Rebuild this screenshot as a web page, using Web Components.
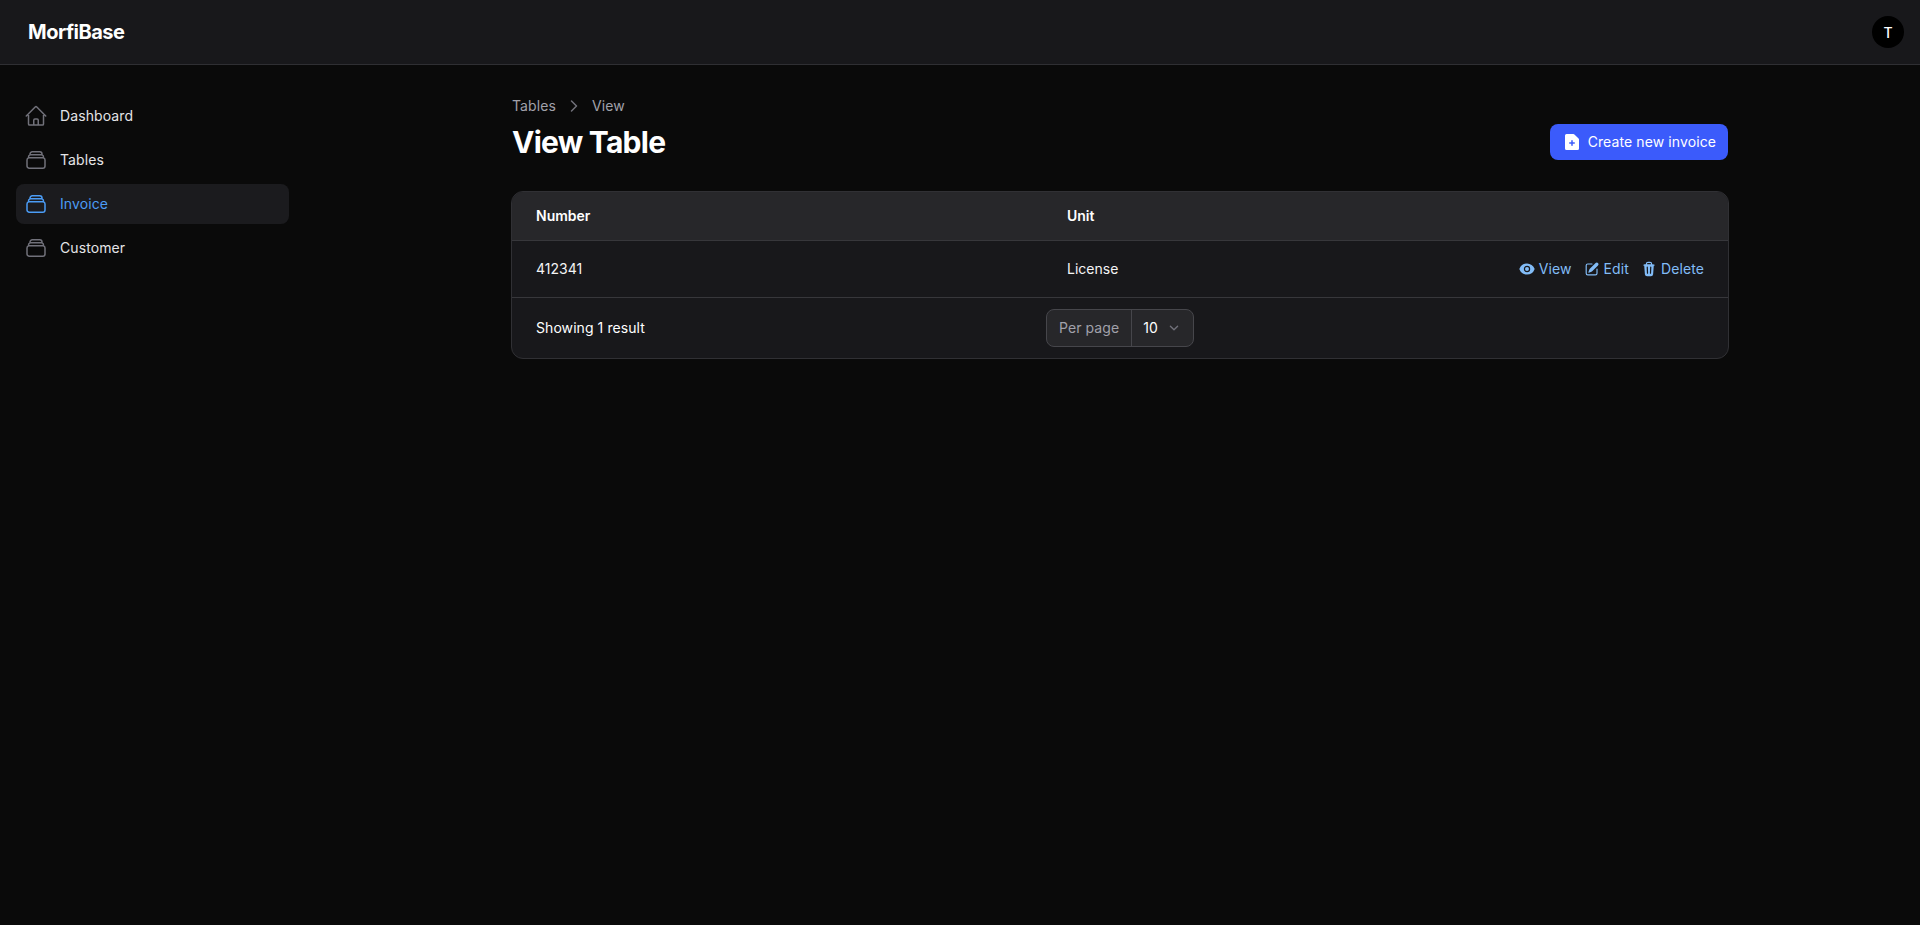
<!DOCTYPE html>
<html lang="en">
<head>
<meta charset="utf-8">
<title>View Table - MorfiBase</title>
<style>
  html, body { margin: 0; height: 100%; background: #0a0a0a; }
  body { font-family: Inter, "Liberation Sans", sans-serif; color: #fff; }
</style>
</head>
<body>
<app-shell>
  <app-topbar slot="top" brand="MorfiBase" initial="T"></app-topbar>
  <app-sidebar slot="side">
    <nav-item icon="home">Dashboard</nav-item>
    <nav-item icon="stack">Tables</nav-item>
    <nav-item icon="stack" active>Invoice</nav-item>
    <nav-item icon="stack">Customer</nav-item>
  </app-sidebar>
  <page-header>
    <a-crumb slot="crumbs">Tables</a-crumb>
    <a-crumb slot="crumbs" last>View</a-crumb>
    <span slot="title">View Table</span>
    <primary-button slot="action" icon="doc-plus">Create new invoice</primary-button>
  </page-header>
  <data-table></data-table>
</app-shell>

<script>
// Icon paths
const ICONS = {
  home: { outline: true, box: 24, d: 'M2.25 12l8.954-8.955c.44-.439 1.152-.439 1.591 0L21.75 12M4.5 9.75v10.125c0 .621.504 1.125 1.125 1.125H9.75v-4.875c0-.621.504-1.125 1.125-1.125h2.25c.621 0 1.125.504 1.125 1.125V21h4.125c.621 0 1.125-.504 1.125-1.125V9.75M8.25 21h8.25' },
  stack: { outline: true, box: 24, d: 'M6 6.878V6a2.25 2.25 0 012.25-2.25h7.5A2.25 2.25 0 0118 6v.878m-12 0c.235-.083.487-.128.75-.128h10.5c.263 0 .515.045.75.128m-12 0A2.25 2.25 0 004.5 9v.878m13.5-3A2.25 2.25 0 0119.5 9v.878m0 0a2.246 2.246 0 00-.75-.128H5.25c-.263 0-.515.045-.75.128m15 0A2.25 2.25 0 0121 12v6a2.25 2.25 0 01-2.25 2.25H5.25A2.25 2.25 0 013 18v-6c0-.98.626-1.813 1.5-2.122' },
  eye: { box: 20, d: 'M10 12.5a2.5 2.5 0 100-5 2.5 2.5 0 000 5zM.664 10.59a1.651 1.651 0 010-1.186A10.004 10.004 0 0110 3c4.257 0 7.893 2.66 9.336 6.41.147.381.146.804 0 1.186A10.004 10.004 0 0110 17c-4.257 0-7.893-2.66-9.336-6.41zM14 10a4 4 0 11-8 0 4 4 0 018 0z' },
  edit: { box: 20, d: 'M5.433 13.917l1.262-3.155A4 4 0 017.58 9.42l6.92-6.918a2.121 2.121 0 013 3l-6.92 6.918c-.383.383-.84.685-1.343.886l-3.154 1.262a.5.5 0 01-.65-.65zM3.5 5.75c0-.69.56-1.25 1.25-1.25H10A.75.75 0 0010 3H4.75A2.75 2.75 0 002 5.75v9.5A2.75 2.75 0 004.75 18h9.5A2.75 2.75 0 0017 15.25V10a.75.75 0 00-1.5 0v5.25c0 .69-.56 1.25-1.25 1.25h-9.5c-.69 0-1.25-.56-1.25-1.25v-9.5z' },
  trash: { box: 20, d: 'M8.75 1A2.75 2.75 0 006 3.75v.443c-.795.077-1.584.176-2.365.298a.75.75 0 10.23 1.482l.149-.022.841 10.518A2.75 2.75 0 007.596 19h4.807a2.75 2.75 0 002.742-2.53l.841-10.52.149.023a.75.75 0 00.23-1.482A41.03 41.03 0 0014 4.193V3.75A2.75 2.75 0 0011.25 1h-2.5zM10 4c.84 0 1.673.025 2.5.075V3.75c0-.69-.56-1.25-1.25-1.25h-2.5c-.69 0-1.25.56-1.25 1.25v.325C8.327 4.025 9.16 4 10 4zM8.58 7.72a.75.75 0 00-1.5.06l.3 7.5a.75.75 0 101.5-.06l-.3-7.5zm4.34.06a.75.75 0 10-1.5-.06l-.3 7.5a.75.75 0 101.5.06l.3-7.5z' },
  'doc-plus': { box: 20, d: 'M4.5 2A1.5 1.5 0 003 3.5v13A1.5 1.5 0 004.5 18h11a1.5 1.5 0 001.5-1.5V7.621a1.5 1.5 0 00-.44-1.06l-4.12-4.122A1.5 1.5 0 0011.378 2H4.5zM10 8a.75.75 0 01.75.75v1.5h1.5a.75.75 0 010 1.5h-1.5v1.5a.75.75 0 01-1.5 0v-1.5h-1.5a.75.75 0 010-1.5h1.5v-1.5A.75.75 0 0110 8z' },
  chevron: { outline: true, box: 20, width: 1.5, d: 'M6 8l4 4 4-4' },
  'chevron-right': { outline: true, box: 20, width: 1.5, d: 'M7.5 5l5 5-5 5' }
};

function iconSvg(name, size) {
  const i = ICONS[name];
  const paint = i.outline
    ? `fill="none" stroke="currentColor" stroke-width="${i.width || 1.5}" stroke-linecap="round" stroke-linejoin="round"`
    : `fill="currentColor" fill-rule="evenodd" clip-rule="evenodd"`;
  return `<svg xmlns="http://www.w3.org/2000/svg" width="${size}" height="${size}" viewBox="0 0 ${i.box} ${i.box}" ${paint} style="display:block;flex:none"><path d="${i.d}"/></svg>`;
}

class AppShell extends HTMLElement {
  constructor() {
    super();
    this.attachShadow({ mode: 'open' });
    this.shadowRoot.innerHTML = `
      <style>
        :host { display: block; min-height: 100vh; background: #0a0a0a; }
        .body { display: grid; grid-template-columns: 320px 1fr; }
        main { width: 1216px; justify-self: center; padding-top: 31px; }
      </style>
      <slot name="top"></slot>
      <div class="body">
        <slot name="side"></slot>
        <main><slot></slot></main>
      </div>
    `;
  }
}
customElements.define('app-shell', AppShell);

class AppTopbar extends HTMLElement {
  constructor() {
    super();
    this.attachShadow({ mode: 'open' });
  }
  connectedCallback() {
    this.shadowRoot.innerHTML = `
      <style>
        :host { display: flex; align-items: center; justify-content: space-between; box-sizing: border-box; height: 65px; padding: 0 16px 0 28px; background: #18181b; border-bottom: 1px solid #2f2f33; }
        .brand { font-size: 20px; line-height: 28px; font-weight: 700; color: #fff; letter-spacing: -0.5px; }
        .avatar { width: 32px; height: 32px; border-radius: 50%; background: #000; color: #fff; font-size: 14px; font-weight: 500; display: flex; align-items: center; justify-content: center; }
      </style>
      <div class="brand">${this.getAttribute('brand')}</div>
      <div class="avatar">${this.getAttribute('initial')}</div>
    `;
  }
}
customElements.define('app-topbar', AppTopbar);

class AppSidebar extends HTMLElement {
  constructor() {
    super();
    this.attachShadow({ mode: 'open' });
    this.shadowRoot.innerHTML = `
      <style>
        :host { display: flex; flex-direction: column; gap: 4px; padding: 31px 31px 0 16px; }
      </style>
      <slot></slot>
    `;
  }
}
customElements.define('app-sidebar', AppSidebar);

class NavItem extends HTMLElement {
  constructor() {
    super();
    this.attachShadow({ mode: 'open' });
  }
  connectedCallback() {
    const active = this.hasAttribute('active');
    this.shadowRoot.innerHTML = `
      <style>
        :host { display: flex; align-items: center; gap: 12px; height: 40px; padding: 0 8px; border-radius: 8px; font-size: 14px; font-weight: 400; letter-spacing: 0.1px; line-height: 20px; color: ${active ? '#4b9cf5' : '#e4e4e7'}; background: ${active ? '#1b1b1e' : 'transparent'}; }
        .icon { color: ${active ? '#4b9cf5' : '#71717a'}; }
      </style>
      <span class="icon">${iconSvg(this.getAttribute('icon'), 24)}</span>
      <slot></slot>
    `;
  }
}
customElements.define('nav-item', NavItem);

class ACrumb extends HTMLElement {
  constructor() {
    super();
    this.attachShadow({ mode: 'open' });
  }
  connectedCallback() {
    const sep = this.hasAttribute('last') ? '' : `<span class="sep">${iconSvg('chevron-right', 20)}</span>`;
    this.shadowRoot.innerHTML = `
      <style>
        :host { display: inline-flex; align-items: center; font-size: 14px; line-height: 20px; font-weight: 400; letter-spacing: 0.1px; color: #a1a1aa; }
        .sep { margin: 0 8px; color: #71717a; }
      </style>
      <slot></slot>${sep}
    `;
  }
}
customElements.define('a-crumb', ACrumb);

class PageHeader extends HTMLElement {
  constructor() {
    super();
    this.attachShadow({ mode: 'open' });
    this.shadowRoot.innerHTML = `
      <style>
        :host { display: flex; align-items: flex-end; justify-content: space-between; margin-bottom: 31px; }
        .crumbs { display: flex; align-items: center; height: 20px; margin-bottom: 8px; }
        h1 { margin: 0; font-size: 30px; line-height: 36px; font-weight: 700; letter-spacing: -0.75px; color: #fff; }
      </style>
      <div>
        <div class="crumbs"><slot name="crumbs"></slot></div>
        <h1><slot name="title"></slot></h1>
      </div>
      <slot name="action"></slot>
    `;
  }
}
customElements.define('page-header', PageHeader);

class PrimaryButton extends HTMLElement {
  constructor() {
    super();
    this.attachShadow({ mode: 'open' });
  }
  connectedCallback() {
    this.shadowRoot.innerHTML = `
      <style>
        :host { display: inline-flex; align-items: center; gap: 6px; box-sizing: border-box; height: 36px; padding: 0 12px; border-radius: 8px; background: #3b5bfb; color: #fff; font-size: 14px; line-height: 20px; font-weight: 400; letter-spacing: 0.1px; }
      </style>
      ${iconSvg(this.getAttribute('icon'), 20)}
      <slot></slot>
    `;
  }
}
customElements.define('primary-button', PrimaryButton);

class RowAction extends HTMLElement {
  constructor() {
    super();
    this.attachShadow({ mode: 'open' });
  }
  connectedCallback() {
    this.shadowRoot.innerHTML = `
      <style>
        :host { display: inline-flex; align-items: center; gap: 4px; font-size: 14px; line-height: 20px; font-weight: 400; letter-spacing: 0.1px; color: #82bcf7; }
      </style>
      ${iconSvg(this.getAttribute('icon'), 16)}
      <slot></slot>
    `;
  }
}
customElements.define('row-action', RowAction);

class PerPage extends HTMLElement {
  constructor() {
    super();
    this.attachShadow({ mode: 'open' });
    this.shadowRoot.innerHTML = `
      <style>
        :host { display: inline-flex; align-items: stretch; box-sizing: border-box; height: 38px; border: 1px solid #46464b; border-radius: 8px; background: #27272a; font-size: 14px; line-height: 20px; }
        .label { display: flex; align-items: center; padding: 0 12px; color: #a1a1aa; border-right: 1px solid #46464b; }
        .value { display: flex; align-items: center; gap: 7px; padding: 0 10px 0 11px; color: #fff; }
        .value span { color: #71717a; }
      </style>
      <div class="label">Per page</div>
      <div class="value">10 <span>${iconSvg('chevron', 18)}</span></div>
    `;
  }
}
customElements.define('per-page', PerPage);

// Data
const db = {
  columns: ['Number', 'Unit'],
  rows: [{ number: '412341', unit: 'License' }],
  total: 'Showing 1 result'
};

class DataTable extends HTMLElement {
  constructor() {
    super();
    this.attachShadow({ mode: 'open' });
  }
  connectedCallback() {
    const rows = db.rows.map(r => `
      <div class="grid row">
        <div>${r.number}</div>
        <div class="unit">${r.unit}</div>
        <div class="actions">
          <row-action icon="eye">View</row-action>
          <row-action icon="edit">Edit</row-action>
          <row-action icon="trash">Delete</row-action>
        </div>
      </div>`).join('');
    this.shadowRoot.innerHTML = `
      <style>
        :host { display: block; box-sizing: border-box; width: 1218px; margin-left: -1px; border: 1px solid #303034; border-radius: 12px; background: #18181b; overflow: hidden; font-size: 14px; line-height: 20px; color: #fff; }
        .grid { display: grid; grid-template-columns: 531px 1fr auto; align-items: center; padding: 0 24px; }
        .head { height: 49px; background: #27272a; font-weight: 600; border-bottom: 1px solid #37373b; box-sizing: border-box; }
        .row { height: 57px; box-sizing: border-box; border-bottom: 1px solid #37373b; color: #f4f4f5; }
        .actions { display: flex; gap: 12px; }
        .foot { height: 60px; box-sizing: border-box; letter-spacing: 0.07px; }
      </style>
      <div class="grid head"><div>${db.columns[0]}</div><div>${db.columns[1]}</div></div>
      ${rows}
      <div class="grid foot"><div>${db.total}</div><div><per-page style="margin-left:-21px"></per-page></div></div>
    `;
  }
}
customElements.define('data-table', DataTable);
</script>
</body>
</html>
